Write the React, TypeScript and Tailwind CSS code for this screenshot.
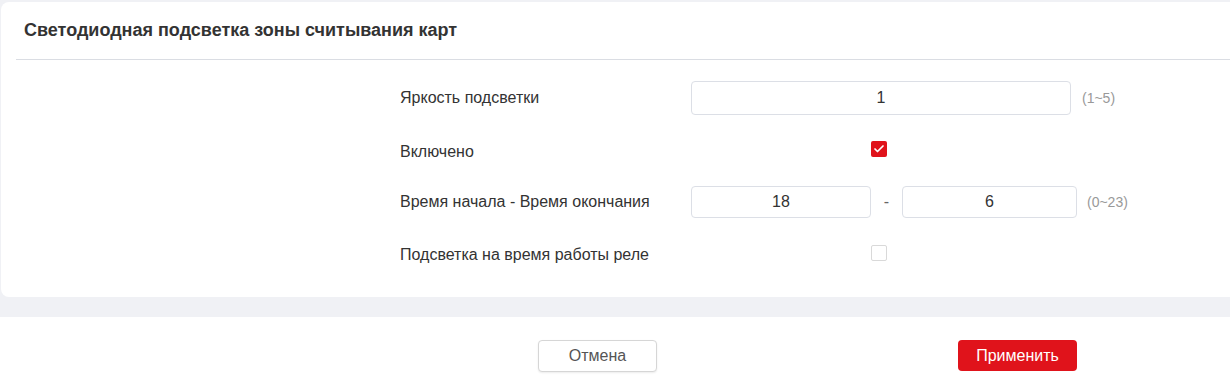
import React from "react";
import { Check } from "lucide-react";

function Field({ value, w }: { value: string; w: string }) {
  return (
    <div className={`${w} border border-[#dcdfe6] rounded-[4px] flex items-center justify-center text-[16px] text-[#333]`}>
      {value}
    </div>
  );
}

export default function App() {
  return (
    <div
      className="w-[1230px] h-[387px] bg-[#f0f1f5] flex flex-col overflow-hidden"
      style={{ fontFamily: '"Liberation Sans", Arial, sans-serif' }}
    >
      {/* card */}
      <div className="mt-[2px] ml-[1px] w-[1240px] h-[295px] bg-white rounded-[8px] flex flex-col">
        <div className="h-[57px] px-[23px] flex items-center text-[18px] font-bold text-[#333]">
          Светодиодная подсветка зоны считывания карт
        </div>
        <div className="ml-[15px] border-b border-[#dadde3]" />

        <div className="pl-[399px] pt-[21px] flex flex-col gap-[18px] text-[16px] text-[#333]">
          <div className="flex items-center h-[34px]">
            <div className="w-[291px]">Яркость подсветки</div>
            <Field value="1" w="w-[380px] h-[34px]" />
            <span className="ml-[11px] text-[14px] text-[#999]">(1~5)</span>
          </div>

          <div className="flex items-center h-[34px]">
            <div className="w-[291px] pt-[4px]">Включено</div>
            <div className="w-[380px] flex justify-center">
              <div className="w-[16px] h-[16px] rounded-[2px] bg-[#e0131b] flex items-center justify-center -ml-[4px] -mt-[2px]">
                <Check className="w-[12px] h-[12px] text-white" strokeWidth={3.5} />
              </div>
            </div>
          </div>

          <div className="flex items-center h-[32px] mt-[1px]">
            <div className="w-[291px]">Время начала - Время окончания</div>
            <Field value="18" w="w-[180px] h-[32px]" />
            <span className="w-[31px] text-center text-[#666]">-</span>
            <Field value="6" w="w-[175px] h-[32px]" />
            <span className="ml-[10px] text-[14px] text-[#999]">(0~23)</span>
          </div>

          <div className="flex items-center h-[34px]">
            <div className="w-[291px] pt-[4px]">Подсветка на время работы реле</div>
            <div className="w-[380px] flex justify-center">
              <div className="w-[16px] h-[16px] rounded-[2px] border border-[#d9d9d9] bg-white -ml-[4px]" />
            </div>
          </div>
        </div>
      </div>

      {/* footer */}
      <div className="mt-[20px] flex-1 bg-white flex items-start pt-[23px]">
        <button className="ml-[538px] w-[119px] h-[32px] border border-[#d6d6d6] rounded-[4px] bg-white text-[16px] text-[#555] shadow-[0_1px_2px_rgba(0,0,0,0.08)]">
          Отмена
        </button>
        <button className="ml-[301px] w-[119px] h-[31px] rounded-[4px] bg-[#e0131b] text-[16px] text-white">
          Применить
        </button>
      </div>
    </div>
  );
}
